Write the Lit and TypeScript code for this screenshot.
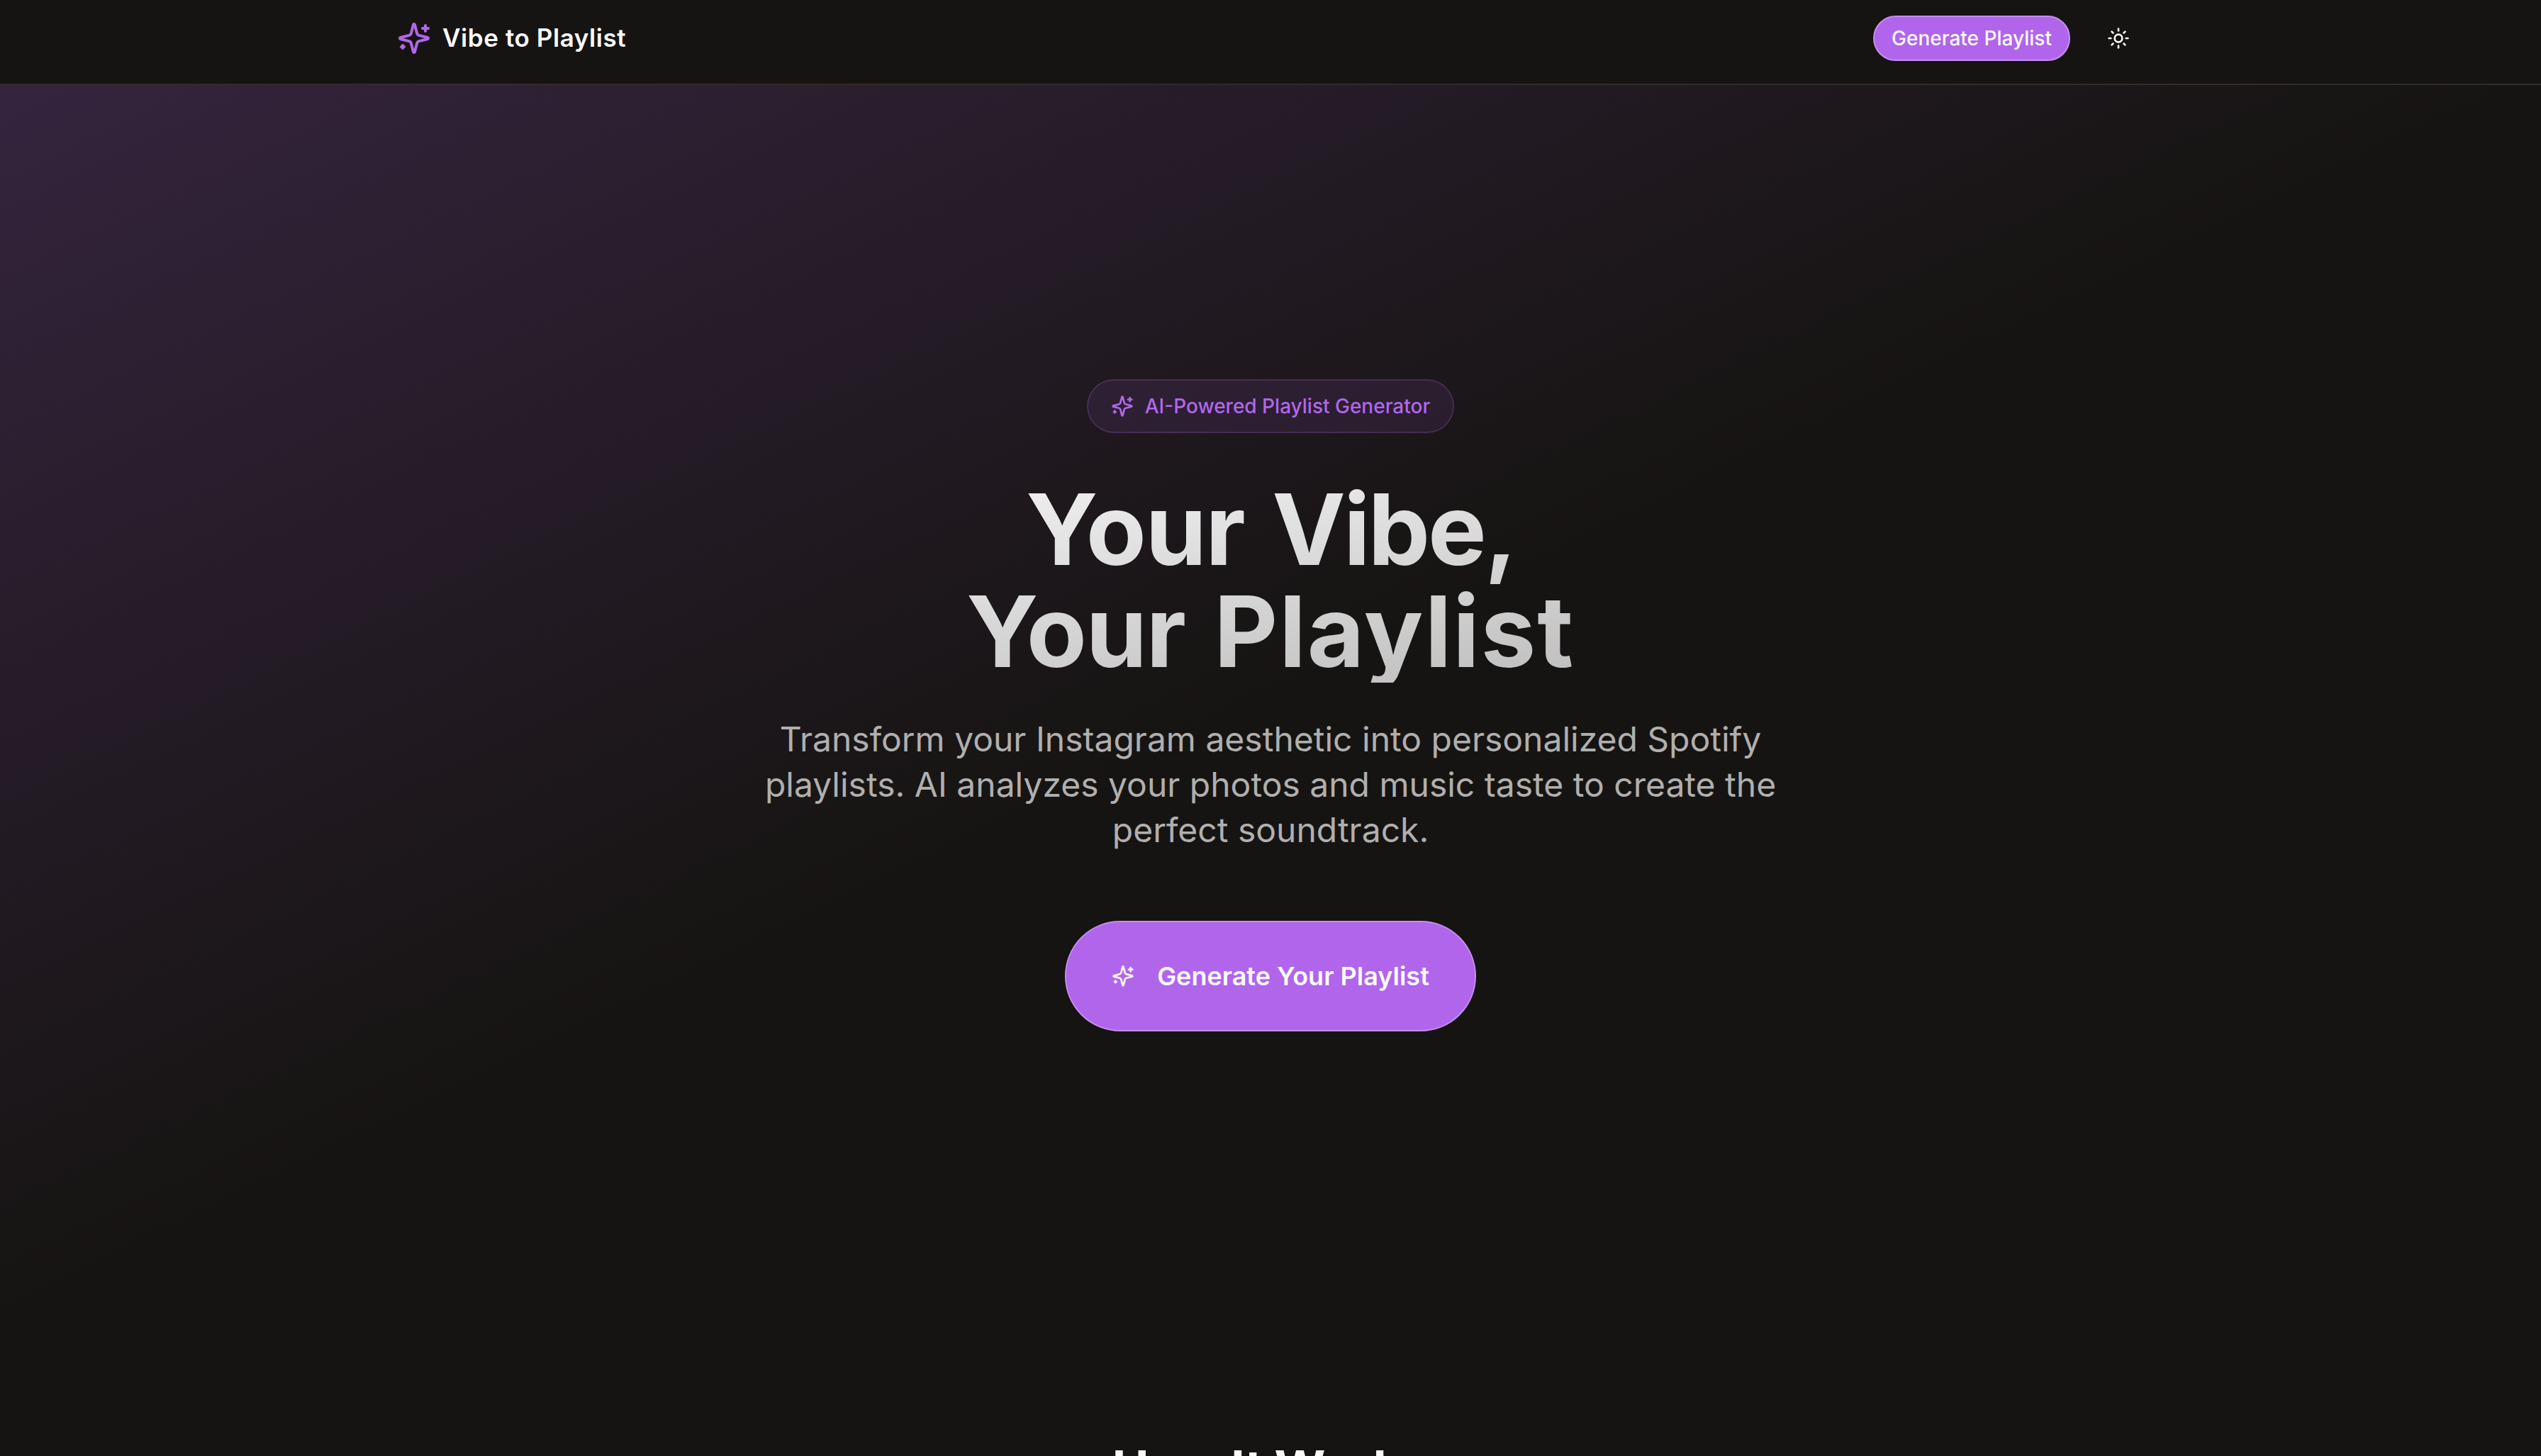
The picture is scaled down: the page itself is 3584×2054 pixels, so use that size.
import { LitElement, html, css, svg } from "lit";
import { customElement } from "lit/decorators.js";

const sparkles = svg`
  <path d="M9.937 15.5A2 2 0 0 0 8.5 14.063l-6.135-1.582a.5.5 0 0 1 0-.962L8.5 9.936A2 2 0 0 0 9.937 8.5l1.582-6.135a.5.5 0 0 1 .963 0L14.063 8.5A2 2 0 0 0 15.5 9.937l6.135 1.581a.5.5 0 0 1 0 .964L15.5 14.063a2 2 0 0 0-1.437 1.437l-1.582 6.135a.5.5 0 0 1-.963 0z"/>
  <path d="M20 3v4"/><path d="M22 5h-4"/><path d="M4 17v2"/><path d="M5 18H3"/>`;

const sun = svg`
  <circle cx="12" cy="12" r="4"/>
  <path d="M12 2v2"/><path d="M12 20v2"/><path d="m4.93 4.93 1.41 1.41"/><path d="m17.66 17.66 1.41 1.41"/>
  <path d="M2 12h2"/><path d="M20 12h2"/><path d="m6.34 17.66-1.41 1.41"/><path d="m19.07 4.93-1.41 1.41"/>`;

@customElement("app-root")
export class AppRoot extends LitElement {
  static styles = css`
    :host {
      display: block;
      height: 2054px;
      overflow: hidden;
      background: #161412;
      color: #fafafa;
      font-family: Inter, "Liberation Sans", sans-serif;
    }
    * { box-sizing: border-box; }
    button { font: inherit; color: inherit; background: none; border: 0; padding: 0; margin: 0; }
    svg {
      display: block;
      flex: none;
      width: 32px;
      height: 32px;
      fill: none;
      stroke: currentColor;
      stroke-width: 2;
      stroke-linecap: round;
      stroke-linejoin: round;
    }
    .header { height: 120px; border-bottom: 2px solid #302c2a; }
    .bar {
      width: 2560px;
      height: 108px;
      margin: 0 auto;
      padding: 0 48px;
      display: flex;
      align-items: center;
      justify-content: space-between;
    }
    .brand { display: flex; align-items: center; gap: 16px; }
    .brand svg { width: 48px; height: 48px; color: #b266eb; }
    .brand-name {
      padding-bottom: 2px;
      font-size: 35px;
      line-height: 56px;
      font-weight: 600;
      letter-spacing: 0.58px;
      white-space: nowrap;
    }
    .actions { display: flex; align-items: center; gap: 32px; }
    .pill {
      display: flex;
      align-items: center;
      justify-content: center;
      border: 2px solid #c78ef2;
      border-radius: 999px;
      background: #b165eb;
      color: #fafafa;
      white-space: nowrap;
    }
    .pill-small { width: 278px; height: 64px; font-size: 28px; line-height: 40px; font-weight: 500; }
    .theme { width: 72px; height: 72px; display: flex; align-items: center; justify-content: center; }
    .hero {
      height: 1750px;
      display: flex;
      flex-direction: column;
      align-items: center;
      justify-content: center;
      background: linear-gradient(to bottom right, #35243e, #161412 50%, #161412);
    }
    .badge {
      width: 518px;
      height: 76px;
      display: flex;
      align-items: center;
      justify-content: center;
      gap: 16px;
      border: 2px solid rgba(178, 102, 235, 0.2);
      border-radius: 999px;
      background: rgba(178, 102, 235, 0.1);
      color: #b266eb;
      font-size: 28px;
      line-height: 40px;
      font-weight: 500;
      white-space: nowrap;
    }
    .title {
      width: 1792px;
      margin: 64px 0 0;
      font-size: 139px;
      line-height: 144px;
      font-weight: 700;
      text-align: center;
      color: transparent;
      background: linear-gradient(to bottom right, #fafafa, #b6b5b5);
      -webkit-background-clip: text;
      background-clip: text;
    }
    .line { display: block; white-space: nowrap; }
    .line-first { word-spacing: 6px; }
    .line-second { word-spacing: 8px; }
    .tight { letter-spacing: -1.6px; }
    .tighter { letter-spacing: -3.1px; }
    .wide { letter-spacing: 1.8px; }
    .lead {
      width: 1536px;
      margin: 48px 0 0;
      font-size: 48px;
      line-height: 64px;
      text-align: center;
      color: #b0afaf;
    }
    .pill-large {
      width: 580px;
      height: 156px;
      margin-top: 96px;
      gap: 32px;
      font-size: 36px;
      line-height: 56px;
      font-weight: 600;
    }
    .steps { padding-top: 161px; text-align: center; }
    .steps-title {
      margin: 0;
      font-size: 69.3px;
      line-height: 80px;
      font-weight: 700;
      letter-spacing: -0.3px;
      white-space: nowrap;
    }
  `;

  render() {
    return html`
      <header class="header">
        <div class="bar">
          <div class="brand">
            <svg viewBox="0 0 24 24">${sparkles}</svg>
            <span class="brand-name">Vibe to Playlist</span>
          </div>
          <div class="actions">
            <button class="pill pill-small"><span>Generate Playlist</span></button>
            <button class="theme"><svg viewBox="0 0 24 24">${sun}</svg></button>
          </div>
        </div>
      </header>
      <main>
        <section class="hero">
          <div class="badge">
            <svg viewBox="0 0 24 24">${sparkles}</svg>
            <span>AI-Powered Playlist Generator</span>
          </div>
          <h1 class="title">
            <span class="line line-first"><span class="tight">Your</span> <span class="tighter">Vibe,</span></span>
            <span class="line line-second"><span class="tight">Your</span> <span class="wide">Playlist</span></span>
          </h1>
          <p class="lead">
            Transform your Instagram aesthetic into personalized Spotify playlists. AI analyzes your photos and music
            taste to create the perfect soundtrack.
          </p>
          <button class="pill pill-large">
            <svg viewBox="0 0 24 24">${sparkles}</svg>
            <span>Generate Your Playlist</span>
          </button>
        </section>
        <section class="steps">
          <h2 class="steps-title">How It Works</h2>
        </section>
      </main>
    `;
  }
}
